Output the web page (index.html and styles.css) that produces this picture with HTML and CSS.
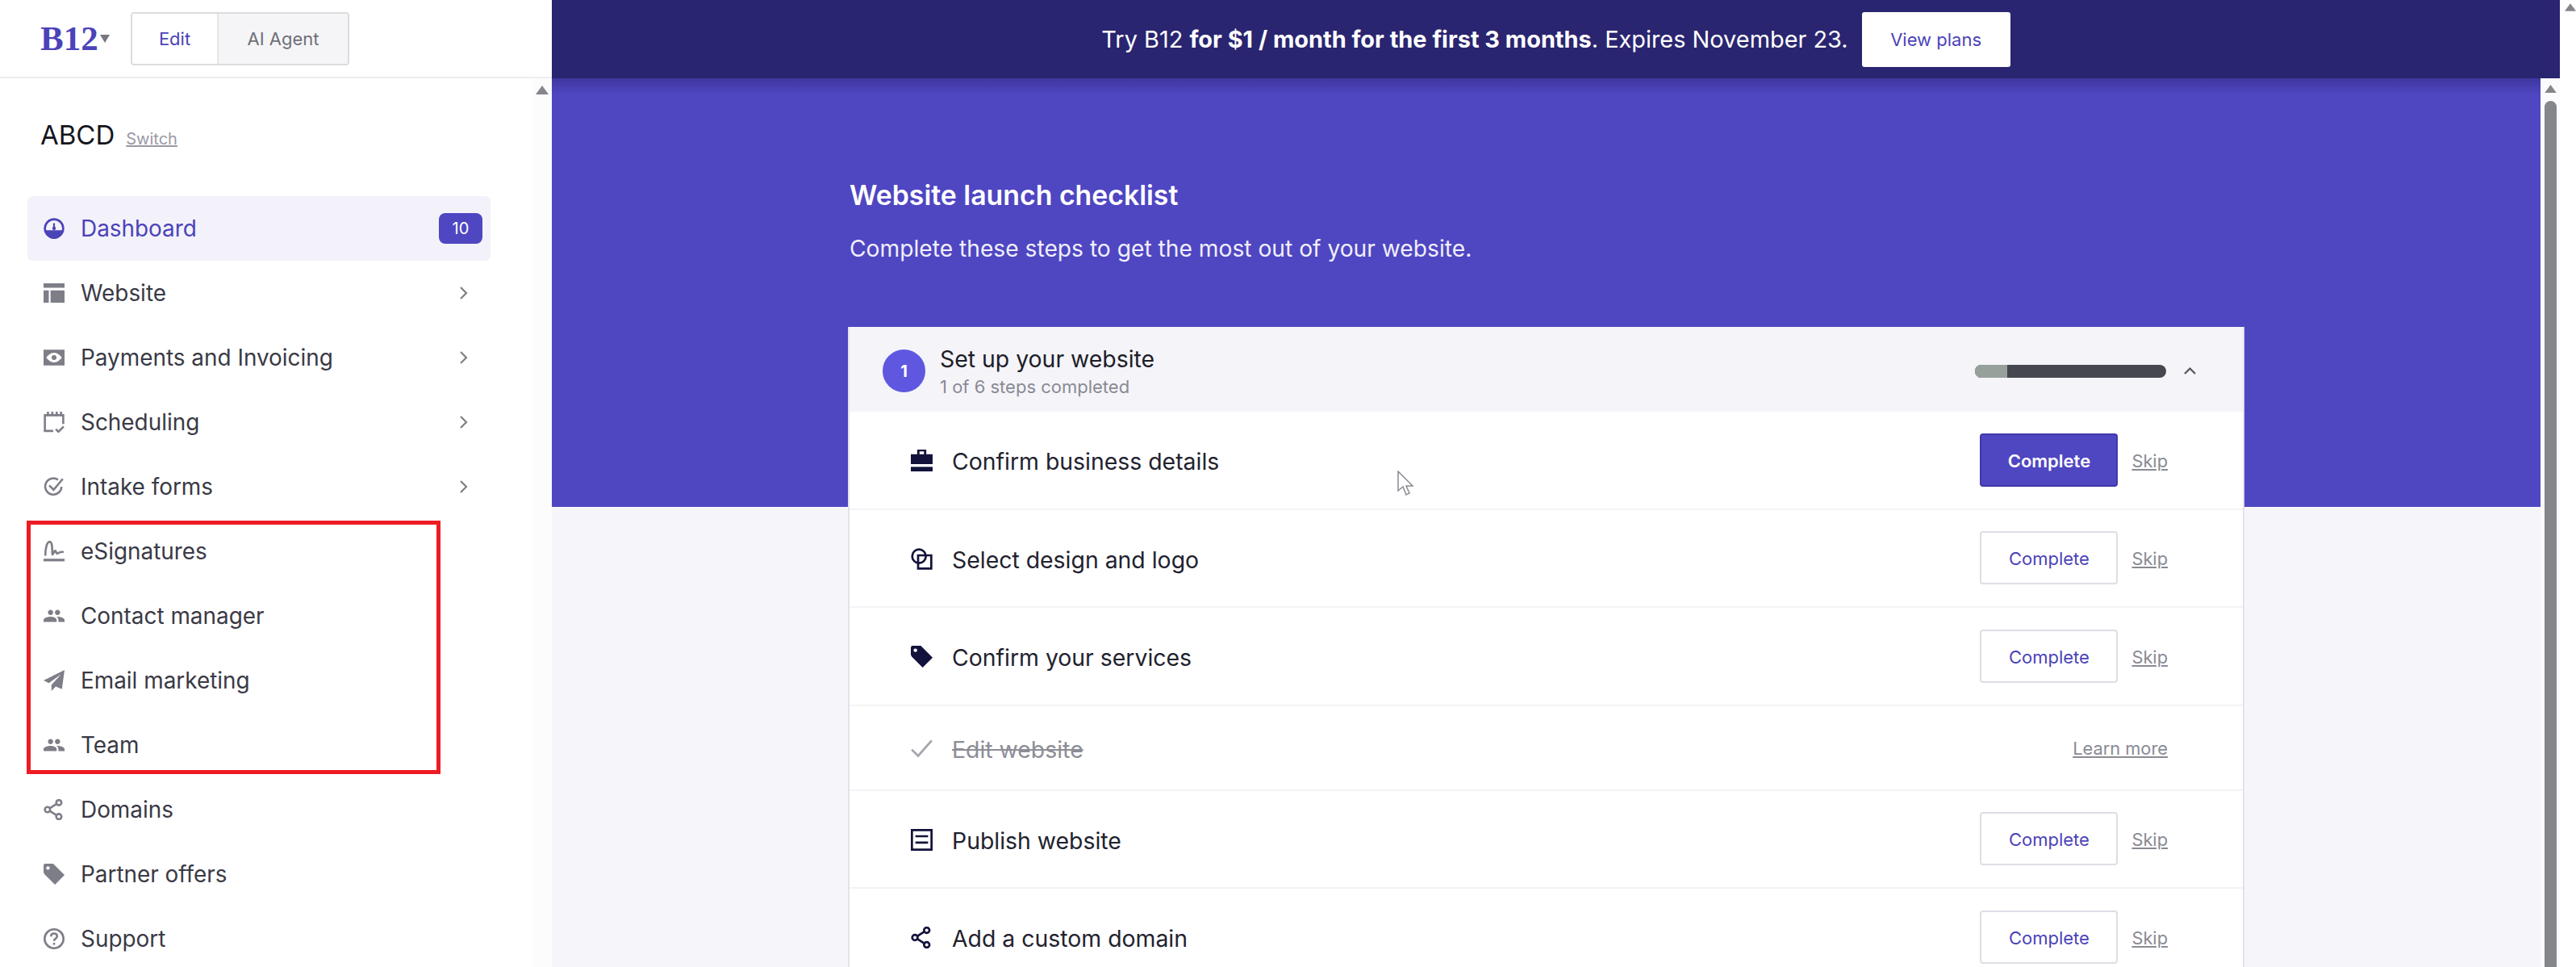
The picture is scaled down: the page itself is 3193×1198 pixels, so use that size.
FILE: index.html
```html
<!DOCTYPE html>
<html lang="en">
<head>
<meta charset="utf-8">
<title>B12 Dashboard</title>
<link rel="stylesheet" href="styles.css">
</head>
<body>
<div class="app">
  <aside class="sidebar">
    <header class="topbar">
      <a class="logo">B12</a>
      <svg class="logo-caret" viewBox="0 0 12 10"><path d="M0 0h12L6 10z"/></svg>
      <div class="mode">
        <span class="mode-item mode-on">Edit</span>
        <span class="mode-item">AI Agent</span>
      </div>
    </header>
    <div class="side-body">
      <div class="side-scroll">
        <div class="org"><span class="org-name">ABCD</span><a class="org-switch">Switch</a></div>
        <nav class="nav">
          <a class="nav-item nav-active">
            <svg class="nav-ico" viewBox="0 0 24 24"><circle cx="12" cy="12" r="10.5" fill="none" stroke="currentColor" stroke-width="2.4"/><path d="M2 14h20a10 10 0 0 1-20 0z"/><path d="M11 6h2v6h-2z"/><circle cx="12" cy="12" r="2"/></svg>
            <span class="nav-label">Dashboard</span>
            <span class="badge">10</span>
          </a>
          <a class="nav-item">
            <svg class="nav-ico" viewBox="0 0 24 24"><path d="M0 1h24v5H0zM0 9h6v14H0zM8 9h16v14H8z"/></svg>
            <span class="nav-label">Website</span>
            <svg class="chev" viewBox="0 0 11 16"><path d="M2 1l7 7-7 7"/></svg>
          </a>
          <a class="nav-item">
            <svg class="nav-ico" viewBox="0 0 24 24"><path fill-rule="evenodd" d="M0 3h24v18H0zM12 6.5c-4 0-7 3-9 5.500 2 2.500 5 5.500 9 5.500s7-3 9-5.500c-2-2.500-5-5.500-9-5.500z"/><circle cx="12" cy="12" r="2.800"/></svg>
            <span class="nav-label">Payments and Invoicing</span>
            <svg class="chev" viewBox="0 0 11 16"><path d="M2 1l7 7-7 7"/></svg>
          </a>
          <a class="nav-item">
            <svg class="nav-ico ico-line" viewBox="0 0 24 24"><path d="M11 22H1.500V4h21v10"/><path d="M5 0v5M10 0v5M15 0v5M20 0v5"/><path d="M14 20l3 3 6-6"/></svg>
            <span class="nav-label">Scheduling</span>
            <svg class="chev" viewBox="0 0 11 16"><path d="M2 1l7 7-7 7"/></svg>
          </a>
          <a class="nav-item">
            <svg class="nav-ico ico-line" viewBox="0 0 24 24"><path d="M20.500 12a9.300 9.300 0 1 1-4-8"/><path d="M6.500 10.500l5 5L22 3"/></svg>
            <span class="nav-label">Intake forms</span>
            <svg class="chev" viewBox="0 0 11 16"><path d="M2 1l7 7-7 7"/></svg>
          </a>
          <a class="nav-item">
            <svg class="nav-ico ico-line" viewBox="0 0 24 24"><path d="M2 17C2 8 4 1 7 1c3 0 3 8 3 14 0 3 3-6 4-3s1 3 3 2 3-2 6-1"/><path d="M0 22h24" stroke-width="3"/></svg>
            <span class="nav-label">eSignatures</span>
          </a>
          <a class="nav-item">
            <svg class="nav-ico" viewBox="0 0 24 24"><path d="M16 11c1.660 0 2.990-1.340 2.990-3S17.660 5 16 5c-1.660 0-3 1.340-3 3s1.340 3 3 3zm-8 0c1.660 0 2.990-1.340 2.990-3S9.660 5 8 5C6.340 5 5 6.340 5 8s1.340 3 3 3zm0 2c-2.330 0-8 1.170-8 3.500V19h15v-2.500c0-2.330-4.670-3.500-7-3.500zm8 0c-.290 0-.620.020-.970.050 1.160.840 1.970 1.970 1.970 3.450V19h7v-2.500c0-2.330-5.670-3.500-8-3.500z"/></svg>
            <span class="nav-label">Contact manager</span>
          </a>
          <a class="nav-item">
            <svg class="nav-ico" viewBox="0 0 24 24"><path d="M24 0L0 12l6 3L20 5 9 17v7l5-5 7 3z"/></svg>
            <span class="nav-label">Email marketing</span>
          </a>
          <a class="nav-item">
            <svg class="nav-ico" viewBox="0 0 24 24"><path d="M16 11c1.660 0 2.990-1.340 2.990-3S17.660 5 16 5c-1.660 0-3 1.340-3 3s1.340 3 3 3zm-8 0c1.660 0 2.990-1.340 2.990-3S9.660 5 8 5C6.340 5 5 6.340 5 8s1.340 3 3 3zm0 2c-2.330 0-8 1.170-8 3.500V19h15v-2.500c0-2.330-4.670-3.500-7-3.500zm8 0c-.290 0-.620.020-.970.050 1.160.840 1.970 1.970 1.970 3.450V19h7v-2.500c0-2.330-5.670-3.500-8-3.500z"/></svg>
            <span class="nav-label">Team</span>
          </a>
          <a class="nav-item">
            <svg class="nav-ico ico-line" viewBox="0 0 24 24"><circle cx="17.500" cy="4" r="3"/><circle cx="4.500" cy="12" r="3"/><circle cx="17.500" cy="20" r="3"/><path d="M7 10.500l8-5M7 13.500l8 5"/></svg>
            <span class="nav-label">Domains</span>
          </a>
          <a class="nav-item">
            <svg class="nav-ico" viewBox="0 0 24 24"><path fill-rule="evenodd" d="M0 2a2 2 0 0 1 2-2h9l13 13-11 11L1 12 0 10zM5 3a2 2 0 1 0 .01 0z"/></svg>
            <span class="nav-label">Partner offers</span>
          </a>
          <a class="nav-item">
            <svg class="nav-ico ico-line" viewBox="0 0 24 24"><circle cx="12" cy="12" r="10.800"/><path d="M8.500 9.500C8.500 7 10 6 12 6s3.500 1.300 3.500 3.200c0 2.800-3.500 2.600-3.500 5.300"/><path d="M12 16.500v2.500"/></svg>
            <span class="nav-label">Support</span>
          </a>
        </nav>
      </div>
      <div class="side-track">
        <svg class="arrow" viewBox="0 0 16 11"><path d="M8 0l8 11H0z"/></svg>
      </div>
    </div>
    <div class="annotation"></div>
  </aside>

  <main class="main">
    <div class="banner">
      <p class="banner-text">Try B12 <b>for $1 / month for the first 3 months</b>. Expires November 23.</p>
      <a class="banner-btn">View plans</a>
    </div>
    <div class="main-body">
      <div class="content">
        <h1 class="title">Website launch checklist</h1>
        <p class="subtitle">Complete these steps to get the most out of your website.</p>
        <section class="card">
          <header class="card-head">
            <span class="step">1</span>
            <div class="card-heading">
              <div class="card-title">Set up your website</div>
              <div class="card-sub">1 of 6 steps completed</div>
            </div>
            <div class="progress"><div class="progress-fill"></div></div>
            <svg class="collapse" viewBox="0 0 15 9"><path d="M1 8l6.500-6.500L14 8"/></svg>
          </header>
          <div class="row">
            <svg class="row-ico" viewBox="0 0 24 24"><path fill-rule="evenodd" d="M7 0h10v5h7v11H0V5h7zM9.500 2v3h5V2z"/><path d="M0 19h24v5H0z"/></svg>
            <span class="row-label">Confirm business details</span>
            <a class="btn btn-primary">Complete</a>
            <a class="link">Skip</a>
          </div>
          <div class="row">
            <svg class="row-ico ico-line" viewBox="0 0 24 24"><circle cx="9" cy="9" r="7.500"/><path d="M8 8h14.500v14.500H8z"/></svg>
            <span class="row-label">Select design and logo</span>
            <a class="btn">Complete</a>
            <a class="link">Skip</a>
          </div>
          <div class="row">
            <svg class="row-ico" viewBox="0 0 24 24"><path fill-rule="evenodd" d="M0 2a2 2 0 0 1 2-2h9l13 13-11 11L1 12 0 10zM5 3a2 2 0 1 0 .01 0z"/></svg>
            <span class="row-label">Confirm your services</span>
            <a class="btn">Complete</a>
            <a class="link">Skip</a>
          </div>
          <div class="row row-done">
            <svg class="row-ico ico-line" viewBox="0 0 24 24"><path d="M1 13l7 7L23 3"/></svg>
            <span class="row-label">Edit website</span>
            <a class="link">Learn more</a>
          </div>
          <div class="row">
            <svg class="row-ico ico-line" viewBox="0 0 24 24"><path d="M1.200 1.200h21.600v21.600H1.200zM5 8h14M5 15h14"/></svg>
            <span class="row-label">Publish website</span>
            <a class="btn">Complete</a>
            <a class="link">Skip</a>
          </div>
          <div class="row">
            <svg class="row-ico ico-line" viewBox="0 0 24 24"><circle cx="17.500" cy="4" r="3"/><circle cx="4.500" cy="12" r="3"/><circle cx="17.500" cy="20" r="3"/><path d="M7 10.500l8-5M7 13.500l8 5"/></svg>
            <span class="row-label">Add a custom domain</span>
            <a class="btn">Complete</a>
            <a class="link">Skip</a>
          </div>
        </section>
      </div>
      <div class="main-track">
        <svg class="arrow" viewBox="0 0 16 11"><path d="M8 0l8 11H0z"/></svg>
        <div class="thumb"></div>
      </div>
    </div>
    <svg class="cursor" viewBox="0 0 20 32"><path d="M1 1v24l6-5 4 10 4-2-4-9h8z"/></svg>
  </main>

  <div class="page-track">
    <svg class="arrow" viewBox="0 0 16 11"><path d="M8 0l8 11H0z"/></svg>
  </div>
</div>
</body>
</html>
```

FILE: styles.css
```css
* { box-sizing: border-box; }
html, body { margin: 0; height: 100%; overflow: hidden; }
body { font-family: Inter, "Noto Sans", sans-serif; color: #22222e; background: #fff; }
p, h1 { margin: 0; }

.app { display: flex; height: 1198px; }

/* Sidebar */
.sidebar { position: relative; width: 684px; flex: none; display: flex; flex-direction: column; }
.topbar { height: 97px; flex: none; display: flex; align-items: center; padding-left: 50px; border-bottom: 2px solid #eeeef0; }
.logo { width: 74px; font: bold 43px/1 "Liberation Serif", serif; color: #4b43b8; }
.logo-caret { width: 12px; height: 10px; fill: #77777f; margin-right: 26px; }
.mode { display: flex; width: 271px; height: 66px; border: 2px solid #dcdce0; border-radius: 4px; overflow: hidden; font-size: 22px; }
.mode-item { flex: 1; display: flex; align-items: center; justify-content: center; background: #f5f5f7; color: #6f6f78; }
.mode-on { flex: none; width: 107px; background: #fff; color: #4b43b8; border-right: 2px solid #e6e6ea; }

.side-body { flex: 1; display: flex; min-height: 0; }
.side-scroll { flex: 1; min-width: 0; }
.org { display: flex; align-items: baseline; gap: 14px; height: 146px; padding: 50px 0 0 50px; line-height: 40px; }
.org-name { font-size: 33px; color: #15151e; }
.org-switch { font-size: 20px; color: #9a9aa4; text-decoration: underline; }

.nav { width: 574px; margin-left: 34px; }
.nav-item { display: flex; align-items: center; height: 80px; padding: 0 10px 0 20px; font-size: 27.9px; color: #3a3a46; border-radius: 6px; }
.nav-ico { width: 26px; height: 26px; flex: none; fill: currentColor; color: #7e7e88; }
.nav-label { flex: 1; margin-left: 20px; }
.chev { width: 11px; height: 16px; flex: none; margin-right: 18px; fill: none; stroke: #7e7e88; stroke-width: 2.2; }
.nav-active { background: #f3f2fb; color: #4b43b8; }
.nav-active .nav-ico { color: #4b43b8; }
.badge { width: 54px; height: 38px; display: flex; align-items: center; justify-content: center; border-radius: 8px; background: #4f46c2; color: #fff; font-size: 20px; }

.side-track { width: 24px; flex: none; background: #fcfcfc; display: flex; flex-direction: column; align-items: center; padding-top: 9px; }
.arrow { width: 16px; height: 11px; fill: #85858c; flex: none; }

.annotation { position: absolute; left: 33px; top: 645px; width: 513px; height: 314px; border: 5px solid #ed1c24; pointer-events: none; }

/* Main */
.main { position: relative; flex: 1; min-width: 0; display: flex; flex-direction: column; background: #f6f6fa; }
.banner { height: 97px; flex: none; display: flex; align-items: center; justify-content: center; gap: 17px; background: #2a2570; color: #fff; }
.banner-text { font-size: 28.9px; }
.banner-text b { font-weight: 700; }
.banner-btn { width: 184px; height: 68px; display: flex; align-items: center; justify-content: center; background: #fff; color: #4b43b8; border-radius: 3px; font-size: 22px; }

.main-body { flex: 1; display: flex; min-height: 0; }
.content { flex: 1; min-width: 0; padding: 125px 367px 0; overflow: hidden;
  background: linear-gradient(rgba(42, 37, 112, .45), rgba(42, 37, 112, 0) 20px), linear-gradient(#4f46c2 531px, #f6f6fa 531px); }
.title { padding-left: 2px; font-size: 33.8px; line-height: 40px; font-weight: 600; color: #fff; }
.subtitle { margin-top: 26px; padding-left: 2px; font-size: 28.2px; line-height: 40px; color: #f0effb; }

.card { margin-top: 77px; background: #fff; border-left: 2px solid #e2e2ec; border-right: 2px solid #e2e2ec; }
.card-head { height: 105px; display: flex; align-items: center; padding: 4px 58px 0 41px; background: #f4f4f9; }
.step { width: 53px; height: 53px; flex: none; display: flex; align-items: center; justify-content: center; border-radius: 50%; background: #5f57e0; color: #fff; font-size: 20px; font-weight: 700; }
.card-heading { flex: 1; margin-left: 18px; }
.card-title { font-size: 28.4px; line-height: 38px; color: #1d1d28; }
.card-sub { font-size: 22px; line-height: 30px; color: #8a8a94; }
.progress { width: 237px; height: 16px; border-radius: 8px; background: #46464e; overflow: hidden; }
.progress-fill { width: 40px; height: 100%; background: #98a09c; }
.collapse { width: 15px; height: 9px; flex: none; margin-left: 22px; fill: none; stroke: #55555e; stroke-width: 2.2; }

.row { height: 121.5px; display: flex; align-items: center; padding: 0 93px 0 76px; border-bottom: 2px solid #f3f3f6; color: #12123c; }
.row-done { height: 105px; }
.row-ico { width: 27px; height: 27px; flex: none; fill: currentColor; margin-top: 2px; }
.row-label { flex: 1; margin-left: 24px; padding-top: 4px; font-size: 28.4px; color: #22222e; }
.row-done .row-ico { color: #a4a4ac; }
.row-done .row-label { color: #8d8d96; text-decoration: line-through; }
.btn { width: 171px; height: 66px; flex: none; display: flex; align-items: center; justify-content: center; margin-right: 17px; padding-top: 2px; border: 2px solid #dedee6; border-radius: 4px; background: #fff; color: #4b43b8; font-size: 22px; }
.btn-primary { background: #4f46c2; border-color: #4038a8; color: #fff; font-weight: 600; }
.link { font-size: 21.8px; padding-top: 2px; color: #8a8a94; text-decoration: underline; }

svg.ico-line { fill: none; stroke: currentColor; stroke-width: 2.4; }

.main-track { width: 24px; flex: none; background: #fbfbfd; display: flex; flex-direction: column; align-items: center; padding-top: 8px; }
.main-track .arrow { width: 15px; height: 10px; }
.thumb { width: 15px; flex: 1; margin-top: 10px; border-radius: 8px 8px 0 0; background: #85858c; }

.cursor { position: absolute; left: 1048px; top: 583px; width: 20px; height: 32px; fill: #fff; stroke: #8a8a92; stroke-width: 1.5; }

.page-track { width: 20px; flex: none; background: #fff; display: flex; flex-direction: column; align-items: flex-end; padding-top: 4px; }
.page-track .arrow { width: 14px; height: 10px; }
```
